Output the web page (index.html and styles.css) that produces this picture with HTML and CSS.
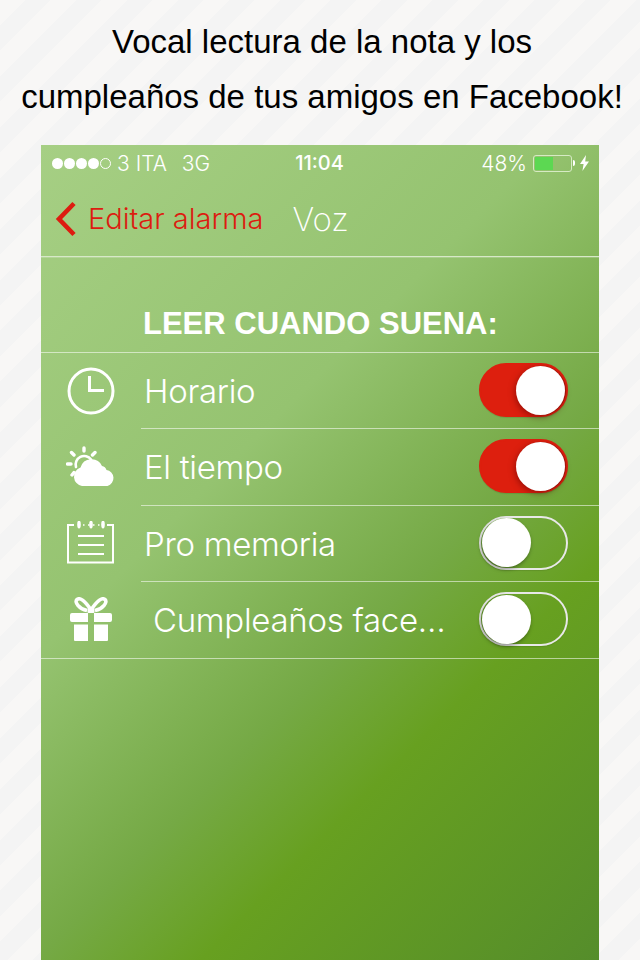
FILE: index.html
```html
<!DOCTYPE html>
<html>
<head>
  <meta charset="utf-8" />
  <title>Voz</title>
  <link rel="stylesheet" href="styles.css">
</head>
<body>
  <div class="caption">
    <p>Vocal lectura de la nota y los</p>
    <p>cumpleaños de tus amigos en Facebook!</p>
  </div>

  <div class="screen">
    <div class="status">
      <div class="status-left">
        <span class="dots"><i></i><i></i><i></i><i></i><i class="off"></i></span>
        <span class="carrier">3 ITA</span>
        <span class="net">3G</span>
      </div>
      <div class="status-time">11:04</div>
      <div class="status-right">
        <span class="pct">48%</span>
        <span class="battery"><span class="battery-fill"></span></span>
        <span class="battery-tip"></span>
        <svg class="bolt" width="9" height="16" viewBox="0 0 9 16"><path d="M6 0 L0 9 H3.6 L2.4 16 L9 6.4 H5.2 Z" fill="#fff"/></svg>
      </div>
    </div>

    <div class="nav">
      <svg class="back" width="22" height="36" viewBox="0 0 22 36"><path d="M19 2.5 L4 18 L19 33.5" fill="none" stroke="#dd1c10" stroke-width="4.6"/></svg>
      <span class="back-text">Editar alarma</span>
      <span class="nav-title">Voz</span>
    </div>

    <h2 class="section">LEER CUANDO SUENA:</h2>

    <div class="list">
      <div class="row">
        <div class="icon">
          <svg width="50" height="50" viewBox="0 0 50 50"><circle cx="25" cy="25" r="22" fill="none" stroke="#fff" stroke-width="3"/><path d="M23.5 10 V24.5 H38" fill="none" stroke="#fff" stroke-width="3"/></svg>
        </div>
        <div class="row-body">
          <span class="label">Horario</span>
          <span class="toggle on"><span class="thumb"></span></span>
        </div>
      </div>
      <div class="row">
        <div class="icon">
          <svg width="50" height="42" viewBox="0 0 50 42"><g fill="none" stroke="#fff" stroke-linecap="round"><path d="M18 2 V5 M5.5 6.5 L8 9 M1.5 18 H5 M29 6.5 L26.5 9 M6 29 L8 26.500" stroke-width="3.4"/><path d="M10 21 A8.5 8.5 0 0 1 25 13.5" stroke-width="2.6"/></g><path d="M16 40 A9.5 9.5 0 0 1 14.5 21.6 A11.5 11.5 0 0 1 36 20 A6 6 0 0 1 40.5 24 A8.200 8.200 0 0 1 41.500 40 Z" fill="#fff"/></svg>
        </div>
        <div class="row-body">
          <span class="label">El tiempo</span>
          <span class="toggle on"><span class="thumb"></span></span>
        </div>
      </div>
      <div class="row">
        <div class="icon">
          <svg width="50" height="44" viewBox="0 0 50 44"><path d="M8 4 H2 V41.500 H47 V4 H41" fill="none" stroke="#fff" stroke-width="2"/><path d="M12 4 H38" stroke="#fff" stroke-width="1.500" stroke-dasharray="1.500 3.500"/><g fill="#fff"><ellipse cx="13" cy="3.500" rx="1.800" ry="4"/><ellipse cx="25" cy="3.500" rx="1.800" ry="4"/><ellipse cx="37" cy="3.500" rx="1.800" ry="4"/></g><path d="M12 15 H38 M12 24 H38 M12 33 H38" stroke="#fff" stroke-width="2"/></svg>
        </div>
        <div class="row-body">
          <span class="label">Pro memoria</span>
          <span class="toggle"><span class="thumb"></span></span>
        </div>
      </div>
      <div class="row">
        <div class="icon gift">
          <svg width="44" height="46" viewBox="0 0 44 46"><path d="M22 13 C16 4 11 0 8 2.500 C5 5 10 12 18 13.500 M22 13 C28 4 33 0 36 2.500 C39 5 34 12 26 13.500" fill="none" stroke="#fff" stroke-width="3.600"/><path d="M3 16 H19 V25 H3 Q1 25 1 23 V18 Q1 16 3 16 Z M25 16 H41 Q43 16 43 18 V23 Q43 25 41 25 H25 Z M5 27.500 H19 V44 H6 Q5 44 5 43 Z M25 27.500 H39 V43 Q39 44 38 44 H25 Z" fill="#fff"/><rect x="18.500" y="11" width="7" height="5" rx="1" fill="#fff"/></svg>
        </div>
        <div class="row-body">
          <span class="label indent">Cumpleaños face…</span>
          <span class="toggle"><span class="thumb"></span></span>
        </div>
      </div>
    </div>
  </div>
</body>
</html>
```

FILE: styles.css
```css
html, body {
  margin: 0;
  padding: 0;
}
body {
  width: 640px;
  height: 960px;
  overflow: hidden;
  background: repeating-linear-gradient(135deg, #f8f7f6 0, #f8f7f6 18px, #f4f4f4 18px, #f4f4f4 36px);
  font-family: "Inter", "Liberation Sans", sans-serif;
  color: #fff;
}

.caption {
  height: 145px;
  padding: 15px 0 0 4px;
  box-sizing: border-box;
  text-align: center;
  font-family: "Liberation Sans", sans-serif;
  font-size: 33px;
  color: #000;
}
.caption p {
  margin: 0;
  height: 54.500px;
  line-height: 54.500px;
}

.screen {
  width: 558px;
  height: 815px;
  margin-left: 41px;
  background: linear-gradient(135deg, #a6cf84 0%, #95c370 37%, #75a945 59%, #67a020 71%, #558d2b 100%);
}

.status {
  height: 36px;
  display: flex;
  align-items: center;
  padding: 0 10px 0 11px;
  font-size: 21px;
  font-weight: 300;
}
.status-left {
  flex: 1;
  display: flex;
  align-items: center;
}
.dots {
  display: flex;
  gap: 1px;
  margin-right: 6px;
}
.dots i {
  width: 11px;
  height: 11px;
  border-radius: 50%;
  background: #fff;
}
.dots i.off {
  background: none;
  border: 1px solid #fff;
  box-sizing: border-box;
}
.net {
  margin-left: 15px;
}
.status-time {
  flex: 1;
  text-align: center;
  font-weight: 500;
  font-size: 20px;
  margin-left: -2px;
}
.status-right {
  flex: 1;
  display: flex;
  align-items: center;
  justify-content: flex-end;
}
.pct {
  margin-right: 6px;
}
.battery {
  width: 39px;
  height: 17px;
  box-sizing: border-box;
  border: 1.500px solid #d6eac4;
  border-radius: 3px;
  padding: 1px;
  display: flex;
}
.battery-fill {
  width: 18px;
  background: #5cd852;
}
.battery-tip {
  width: 2px;
  height: 6px;
  margin-left: 1px;
  background: #fff;
  border-radius: 0 2px 2px 0;
}
.bolt {
  margin-left: 5px;
}

.nav {
  height: 75px;
  display: flex;
  align-items: center;
  padding-left: 14px;
  border-bottom: 1px solid #d7e8c8;
  box-shadow: 0 1px 0 rgba(255, 255, 255, 0.2);
}
.back {
  margin-right: 11px;
}
.back-text {
  font-size: 29px;
  font-weight: 300;
  color: #dd1c10;
  margin-right: 29px;
}
.nav-title {
  font-size: 33px;
  font-weight: 200;
}

.section {
  margin: 0;
  height: 96px;
  line-height: 134px;
  padding-left: 102px;
  font-family: "Liberation Sans", sans-serif;
  font-size: 31px;
  font-weight: 700;
}

.list {
  box-shadow: 0 -1px 0 rgba(255, 255, 255, 0.55);
}
.row {
  display: flex;
  height: 76.250px;
}
.icon {
  width: 100px;
  flex: none;
  display: flex;
  align-items: center;
  justify-content: center;
  padding-right: 1px;
  padding-bottom: 1px;
  box-sizing: border-box;
}
.icon.gift {
  padding-bottom: 0;
  padding-top: 1px;
}
.row-body {
  flex: 1;
  display: flex;
  align-items: center;
  justify-content: space-between;
  padding: 0 31px 1px 3px;
  border-bottom: 1px solid rgba(255, 255, 255, 0.55);
}
.row:last-child {
  border-bottom: 1px solid rgba(255, 255, 255, 0.55);
}
.row:last-child .row-body {
  border-bottom: 0;
}
.label {
  font-size: 33px;
  font-weight: 300;
  letter-spacing: -0.3px;
  padding-top: 2px;
}
.label.indent {
  margin-left: 9px;
}

.toggle {
  width: 89px;
  height: 54px;
  box-sizing: border-box;
  border: 2px solid #e8e8e8;
  border-radius: 27px;
  display: flex;
  align-items: center;
  padding: 0 1px;
  box-shadow: 0 1px 1px rgba(0, 0, 0, 0.1);
}
.toggle.on {
  background: #dd1f0e;
  border-color: #dd1f0e;
  justify-content: flex-end;
}
.thumb {
  width: 49px;
  height: 49px;
  border-radius: 50%;
  background: #fff;
  box-shadow: -1px 2px 4px rgba(0, 0, 0, 0.4);
}
.toggle.on .thumb {
  box-shadow: -1px 2px 6px rgba(90, 0, 0, 0.5), 1px 0 0 #a9170c;
}
```
